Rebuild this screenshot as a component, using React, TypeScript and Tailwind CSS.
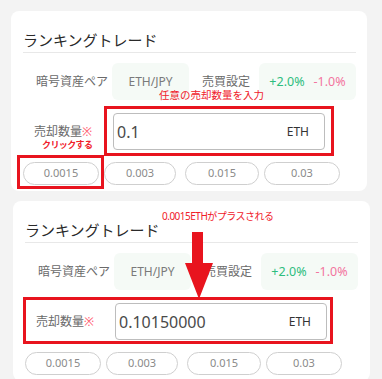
import React from "react";

const FONT = { fontFamily: '"Noto Sans", "Noto Sans CJK JP", sans-serif' };

type CardProps = {
  value: string;
  first: boolean;
};

function Pills() {
  return (
    <div className="mt-[12px] flex h-[23px] text-[11px] text-[#8a8a8a]">
      <div className="w-[76px] h-full rounded-full border border-[#cfcfcf] flex items-center justify-center">0.0015</div>
      <div className="ml-[5px] w-[72px] h-full rounded-full border border-[#cfcfcf] flex items-center justify-center">0.003</div>
      <div className="ml-[9px] w-[74px] h-full rounded-full border border-[#cfcfcf] flex items-center justify-center">0.015</div>
      <div className="ml-[5px] w-[76px] h-full rounded-full border border-[#cfcfcf] flex items-center justify-center">0.03</div>
    </div>
  );
}

function Card({ value, first }: CardProps) {
  return (
    <div
      className={
        first
          ? "relative ml-[11px] w-[356px] bg-white rounded-[8px] pl-[12px] pr-[11px] pt-[19px] pb-[6px]"
          : "relative ml-[13px] w-[357px] bg-white rounded-[8px] pl-[12px] pr-[12px] pt-[19px] pb-[6px]"
      }
    >
      <div className="text-[15px] leading-[20px] text-[#2a2a2a] pb-[2px] border-b border-[#e8e8e8]">
        ランキングトレード
      </div>
      <div className="mt-[10px] grid grid-cols-[89px_77px_70px_97px] h-[37px] items-center text-[12px] leading-[14px]">
        <div className="pl-[13px] text-[#6a6a6a]">暗号資産ペア</div>
        <div className="h-full bg-[#f5faf6] rounded-[6px] flex items-center justify-center text-[#7a7a7a]">ETH/JPY</div>
        <div className="pl-[13px] text-[#6a6a6a]">売買設定</div>
        <div className="h-full bg-[#f5faf6] rounded-[6px] flex items-center justify-center gap-[9px] text-[12.5px]">
          <span className="text-[#2dbd7e]">+2.0%</span>
          <span className="text-[#f3759f]">-1.0%</span>
        </div>
      </div>
      <div className="mt-[13px] flex h-[37px]">
        <div className="w-[90px] pl-[11px] flex items-center text-[12px] leading-[14px] text-[#6a6a6a]">
          売却数量<span className="text-[#ff5a6e]">※</span>
        </div>
        <div className="w-[212px] border border-[#bdbdbd] rounded-[4px] flex items-center justify-between pl-[3px] pr-[15px]">
          <span className="text-[16px] text-[#4a4a4a]">{value}</span>
          <span className="text-[12px] text-[#333]">ETH</span>
        </div>
      </div>
      <Pills />

      {first ? (
        <>
          <div className="absolute left-[148px] top-[78px] text-[10.5px] leading-[12px] text-[#f0202a]">
            任意の売却数量を入力
          </div>
          <div className="absolute left-[93px] top-[95px] w-[230px] h-[50px] border-[3px] border-[#e8141e]" />
          <div className="absolute left-[31px] top-[128px] text-[9px] leading-[11px] font-bold text-[#f0202a] tracking-[-0.6px]">
            クリックする
          </div>
          <div className="absolute left-[6px] top-[144px] w-[87px] h-[34px] border-[3px] border-[#e8141e]" />
        </>
      ) : (
        <>
          <div className="absolute left-[149px] top-[9px] text-[10px] leading-[12px] text-[#f0202a] tracking-[-0.5px]">
            0.0015ETHがプラスされる
          </div>
          <svg className="absolute left-[172px] top-[31px]" width="28" height="67" viewBox="0 0 28 67">
            <polygon points="7,0 18,0 18,31 28,31 14,67 0,31 7,31" fill="#e8141e" />
          </svg>
          <div className="absolute left-[10px] top-[96px] w-[310px] h-[47px] border-[3px] border-[#e8141e]" />
        </>
      )}
    </div>
  );
}

export default function App() {
  return (
    <div style={FONT} className="w-[382px] h-[379px] overflow-hidden bg-[#f3f3f3] pt-[11px] flex flex-col gap-[10px]">
      <Card value="0.1" first={true} />
      <Card value="0.10150000" first={false} />
    </div>
  );
}
